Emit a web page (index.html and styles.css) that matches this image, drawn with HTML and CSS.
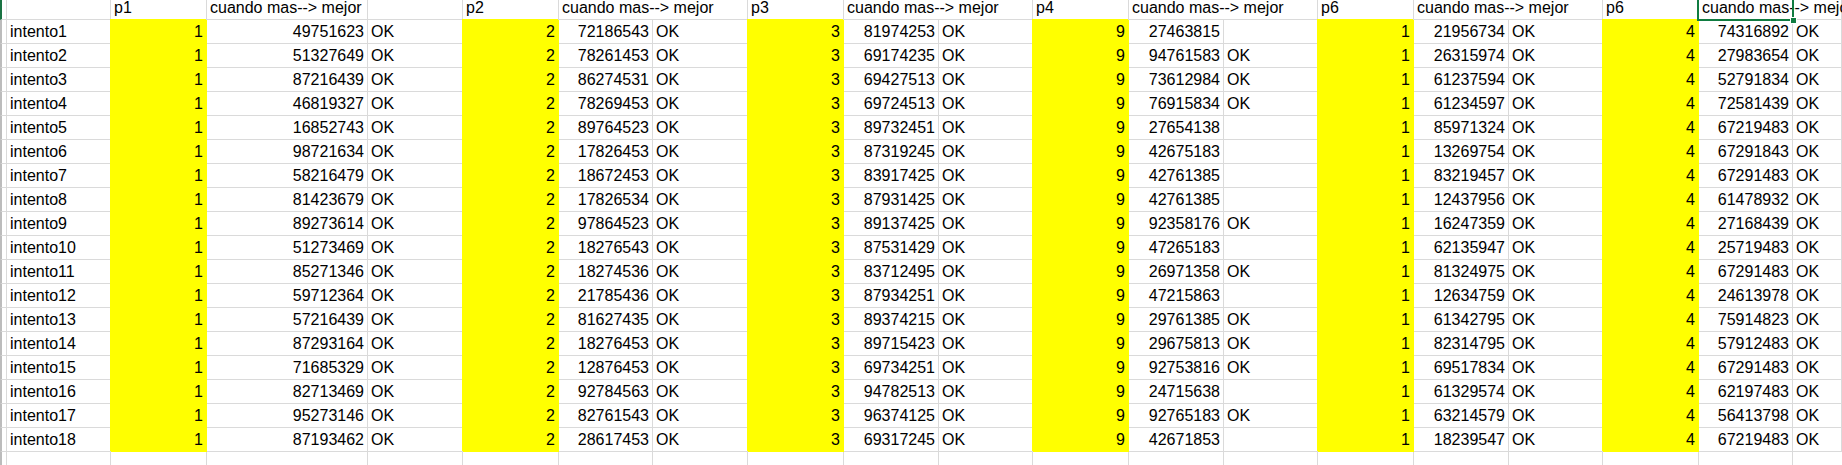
FILE: index.html
```html
<!DOCTYPE html>
<html lang="es">
<head>
<meta charset="utf-8">
<title>Hoja</title>
<link rel="stylesheet" href="styles.css">
</head>
<body>
<div class="sheet">
<div class="s cur"></div><div class="t"></div><div class="t">p1</div><div class="t">cuando mas--&gt; mejor</div><div class="t"></div><div class="t">p2</div><div class="t w2">cuando mas--&gt; mejor</div><div class="t">p3</div><div class="t w2">cuando mas--&gt; mejor</div><div class="t">p4</div><div class="t w2">cuando mas--&gt; mejor</div><div class="t">p6</div><div class="t w2">cuando mas--&gt; mejor</div><div class="t">p6</div><div class="t w2 active">cuando mas--&gt; mejor<span class="sel"><span class="handle"></span></span></div>

<div class="s"></div><div class="t">intento1</div><div class="y">1</div><div class="n">49751623</div><div class="t">OK</div><div class="y">2</div><div class="n">72186543</div><div class="t">OK</div><div class="y">3</div><div class="n">81974253</div><div class="t">OK</div><div class="y">9</div><div class="n">27463815</div><div class="t"></div><div class="y">1</div><div class="n">21956734</div><div class="t">OK</div><div class="y">4</div><div class="n">74316892</div><div class="t">OK</div>
<div class="s"></div><div class="t">intento2</div><div class="y">1</div><div class="n">51327649</div><div class="t">OK</div><div class="y">2</div><div class="n">78261453</div><div class="t">OK</div><div class="y">3</div><div class="n">69174235</div><div class="t">OK</div><div class="y">9</div><div class="n">94761583</div><div class="t">OK</div><div class="y">1</div><div class="n">26315974</div><div class="t">OK</div><div class="y">4</div><div class="n">27983654</div><div class="t">OK</div>
<div class="s"></div><div class="t">intento3</div><div class="y">1</div><div class="n">87216439</div><div class="t">OK</div><div class="y">2</div><div class="n">86274531</div><div class="t">OK</div><div class="y">3</div><div class="n">69427513</div><div class="t">OK</div><div class="y">9</div><div class="n">73612984</div><div class="t">OK</div><div class="y">1</div><div class="n">61237594</div><div class="t">OK</div><div class="y">4</div><div class="n">52791834</div><div class="t">OK</div>
<div class="s"></div><div class="t">intento4</div><div class="y">1</div><div class="n">46819327</div><div class="t">OK</div><div class="y">2</div><div class="n">78269453</div><div class="t">OK</div><div class="y">3</div><div class="n">69724513</div><div class="t">OK</div><div class="y">9</div><div class="n">76915834</div><div class="t">OK</div><div class="y">1</div><div class="n">61234597</div><div class="t">OK</div><div class="y">4</div><div class="n">72581439</div><div class="t">OK</div>
<div class="s"></div><div class="t">intento5</div><div class="y">1</div><div class="n">16852743</div><div class="t">OK</div><div class="y">2</div><div class="n">89764523</div><div class="t">OK</div><div class="y">3</div><div class="n">89732451</div><div class="t">OK</div><div class="y">9</div><div class="n">27654138</div><div class="t"></div><div class="y">1</div><div class="n">85971324</div><div class="t">OK</div><div class="y">4</div><div class="n">67219483</div><div class="t">OK</div>
<div class="s"></div><div class="t">intento6</div><div class="y">1</div><div class="n">98721634</div><div class="t">OK</div><div class="y">2</div><div class="n">17826453</div><div class="t">OK</div><div class="y">3</div><div class="n">87319245</div><div class="t">OK</div><div class="y">9</div><div class="n">42675183</div><div class="t"></div><div class="y">1</div><div class="n">13269754</div><div class="t">OK</div><div class="y">4</div><div class="n">67291843</div><div class="t">OK</div>
<div class="s"></div><div class="t">intento7</div><div class="y">1</div><div class="n">58216479</div><div class="t">OK</div><div class="y">2</div><div class="n">18672453</div><div class="t">OK</div><div class="y">3</div><div class="n">83917425</div><div class="t">OK</div><div class="y">9</div><div class="n">42761385</div><div class="t"></div><div class="y">1</div><div class="n">83219457</div><div class="t">OK</div><div class="y">4</div><div class="n">67291483</div><div class="t">OK</div>
<div class="s"></div><div class="t">intento8</div><div class="y">1</div><div class="n">81423679</div><div class="t">OK</div><div class="y">2</div><div class="n">17826534</div><div class="t">OK</div><div class="y">3</div><div class="n">87931425</div><div class="t">OK</div><div class="y">9</div><div class="n">42761385</div><div class="t"></div><div class="y">1</div><div class="n">12437956</div><div class="t">OK</div><div class="y">4</div><div class="n">61478932</div><div class="t">OK</div>
<div class="s"></div><div class="t">intento9</div><div class="y">1</div><div class="n">89273614</div><div class="t">OK</div><div class="y">2</div><div class="n">97864523</div><div class="t">OK</div><div class="y">3</div><div class="n">89137425</div><div class="t">OK</div><div class="y">9</div><div class="n">92358176</div><div class="t">OK</div><div class="y">1</div><div class="n">16247359</div><div class="t">OK</div><div class="y">4</div><div class="n">27168439</div><div class="t">OK</div>
<div class="s"></div><div class="t">intento10</div><div class="y">1</div><div class="n">51273469</div><div class="t">OK</div><div class="y">2</div><div class="n">18276543</div><div class="t">OK</div><div class="y">3</div><div class="n">87531429</div><div class="t">OK</div><div class="y">9</div><div class="n">47265183</div><div class="t"></div><div class="y">1</div><div class="n">62135947</div><div class="t">OK</div><div class="y">4</div><div class="n">25719483</div><div class="t">OK</div>
<div class="s"></div><div class="t">intento11</div><div class="y">1</div><div class="n">85271346</div><div class="t">OK</div><div class="y">2</div><div class="n">18274536</div><div class="t">OK</div><div class="y">3</div><div class="n">83712495</div><div class="t">OK</div><div class="y">9</div><div class="n">26971358</div><div class="t">OK</div><div class="y">1</div><div class="n">81324975</div><div class="t">OK</div><div class="y">4</div><div class="n">67291483</div><div class="t">OK</div>
<div class="s"></div><div class="t">intento12</div><div class="y">1</div><div class="n">59712364</div><div class="t">OK</div><div class="y">2</div><div class="n">21785436</div><div class="t">OK</div><div class="y">3</div><div class="n">87934251</div><div class="t">OK</div><div class="y">9</div><div class="n">47215863</div><div class="t"></div><div class="y">1</div><div class="n">12634759</div><div class="t">OK</div><div class="y">4</div><div class="n">24613978</div><div class="t">OK</div>
<div class="s"></div><div class="t">intento13</div><div class="y">1</div><div class="n">57216439</div><div class="t">OK</div><div class="y">2</div><div class="n">81627435</div><div class="t">OK</div><div class="y">3</div><div class="n">89374215</div><div class="t">OK</div><div class="y">9</div><div class="n">29761385</div><div class="t">OK</div><div class="y">1</div><div class="n">61342795</div><div class="t">OK</div><div class="y">4</div><div class="n">75914823</div><div class="t">OK</div>
<div class="s"></div><div class="t">intento14</div><div class="y">1</div><div class="n">87293164</div><div class="t">OK</div><div class="y">2</div><div class="n">18276453</div><div class="t">OK</div><div class="y">3</div><div class="n">89715423</div><div class="t">OK</div><div class="y">9</div><div class="n">29675813</div><div class="t">OK</div><div class="y">1</div><div class="n">82314795</div><div class="t">OK</div><div class="y">4</div><div class="n">57912483</div><div class="t">OK</div>
<div class="s"></div><div class="t">intento15</div><div class="y">1</div><div class="n">71685329</div><div class="t">OK</div><div class="y">2</div><div class="n">12876453</div><div class="t">OK</div><div class="y">3</div><div class="n">69734251</div><div class="t">OK</div><div class="y">9</div><div class="n">92753816</div><div class="t">OK</div><div class="y">1</div><div class="n">69517834</div><div class="t">OK</div><div class="y">4</div><div class="n">67291483</div><div class="t">OK</div>
<div class="s"></div><div class="t">intento16</div><div class="y">1</div><div class="n">82713469</div><div class="t">OK</div><div class="y">2</div><div class="n">92784563</div><div class="t">OK</div><div class="y">3</div><div class="n">94782513</div><div class="t">OK</div><div class="y">9</div><div class="n">24715638</div><div class="t"></div><div class="y">1</div><div class="n">61329574</div><div class="t">OK</div><div class="y">4</div><div class="n">62197483</div><div class="t">OK</div>
<div class="s"></div><div class="t">intento17</div><div class="y">1</div><div class="n">95273146</div><div class="t">OK</div><div class="y">2</div><div class="n">82761543</div><div class="t">OK</div><div class="y">3</div><div class="n">96374125</div><div class="t">OK</div><div class="y">9</div><div class="n">92765183</div><div class="t">OK</div><div class="y">1</div><div class="n">63214579</div><div class="t">OK</div><div class="y">4</div><div class="n">56413798</div><div class="t">OK</div>
<div class="s"></div><div class="t">intento18</div><div class="y">1</div><div class="n">87193462</div><div class="t">OK</div><div class="y">2</div><div class="n">28617453</div><div class="t">OK</div><div class="y">3</div><div class="n">69317245</div><div class="t">OK</div><div class="y">9</div><div class="n">42671853</div><div class="t"></div><div class="y">1</div><div class="n">18239547</div><div class="t">OK</div><div class="y">4</div><div class="n">67219483</div><div class="t">OK</div>

<div class="s"></div><div class="t"></div><div class="t"></div><div class="t"></div><div class="t"></div><div class="t"></div><div class="t"></div><div class="t"></div><div class="t"></div><div class="t"></div><div class="t"></div><div class="t"></div><div class="t"></div><div class="t"></div><div class="t"></div><div class="t"></div><div class="t"></div><div class="t"></div><div class="t"></div>
</div>
</body>
</html>
```

FILE: styles.css
```css
html, body {
  margin: 0;
  padding: 0;
  background: #ffffff;
}

body {
  width: 1842px;
  height: 465px;
  overflow: hidden;
  font-family: "Liberation Sans", Arial, sans-serif;
  font-size: 16px;
  color: #000000;
}

.sheet {
  display: grid;
  grid-template-columns: 7px 104px 96px 161px 95px 96px 94px 95px 96px 95px 94px 96px 95px 94px 96px 95px 94px 96px 94px 49px;
  grid-auto-rows: 24px;
  margin-top: -4px;
}

.s, .t, .n, .y {
  box-sizing: border-box;
  border-right: 1px solid #dadada;
  border-bottom: 1px solid #dadada;
  line-height: 23px;
  padding: 0 3px;
  white-space: nowrap;
  overflow: hidden;
}

.s {
  padding: 0;
  border-left: 2px solid #bcbcbc;
}

.s.cur {
  border-left-color: #1a7343;
}

.n, .y {
  text-align: right;
}

.y {
  background: #ffff00;
  border-right-color: #ffff00;
  border-bottom-color: #ffff00;
  box-shadow: -1px -1px 0 #ffff00;
}

.w2 {
  grid-column: span 2;
}

.active {
  position: relative;
  overflow: visible;
}

.sel {
  position: absolute;
  left: -2px;
  top: -2px;
  width: 97px;
  height: 27px;
  box-sizing: border-box;
  border: 2px solid #107c41;
}

.handle {
  position: absolute;
  right: -5px;
  bottom: -5px;
  width: 7px;
  height: 7px;
  box-sizing: border-box;
  background: #107c41;
  border: 1px solid #ffffff;
}
```
